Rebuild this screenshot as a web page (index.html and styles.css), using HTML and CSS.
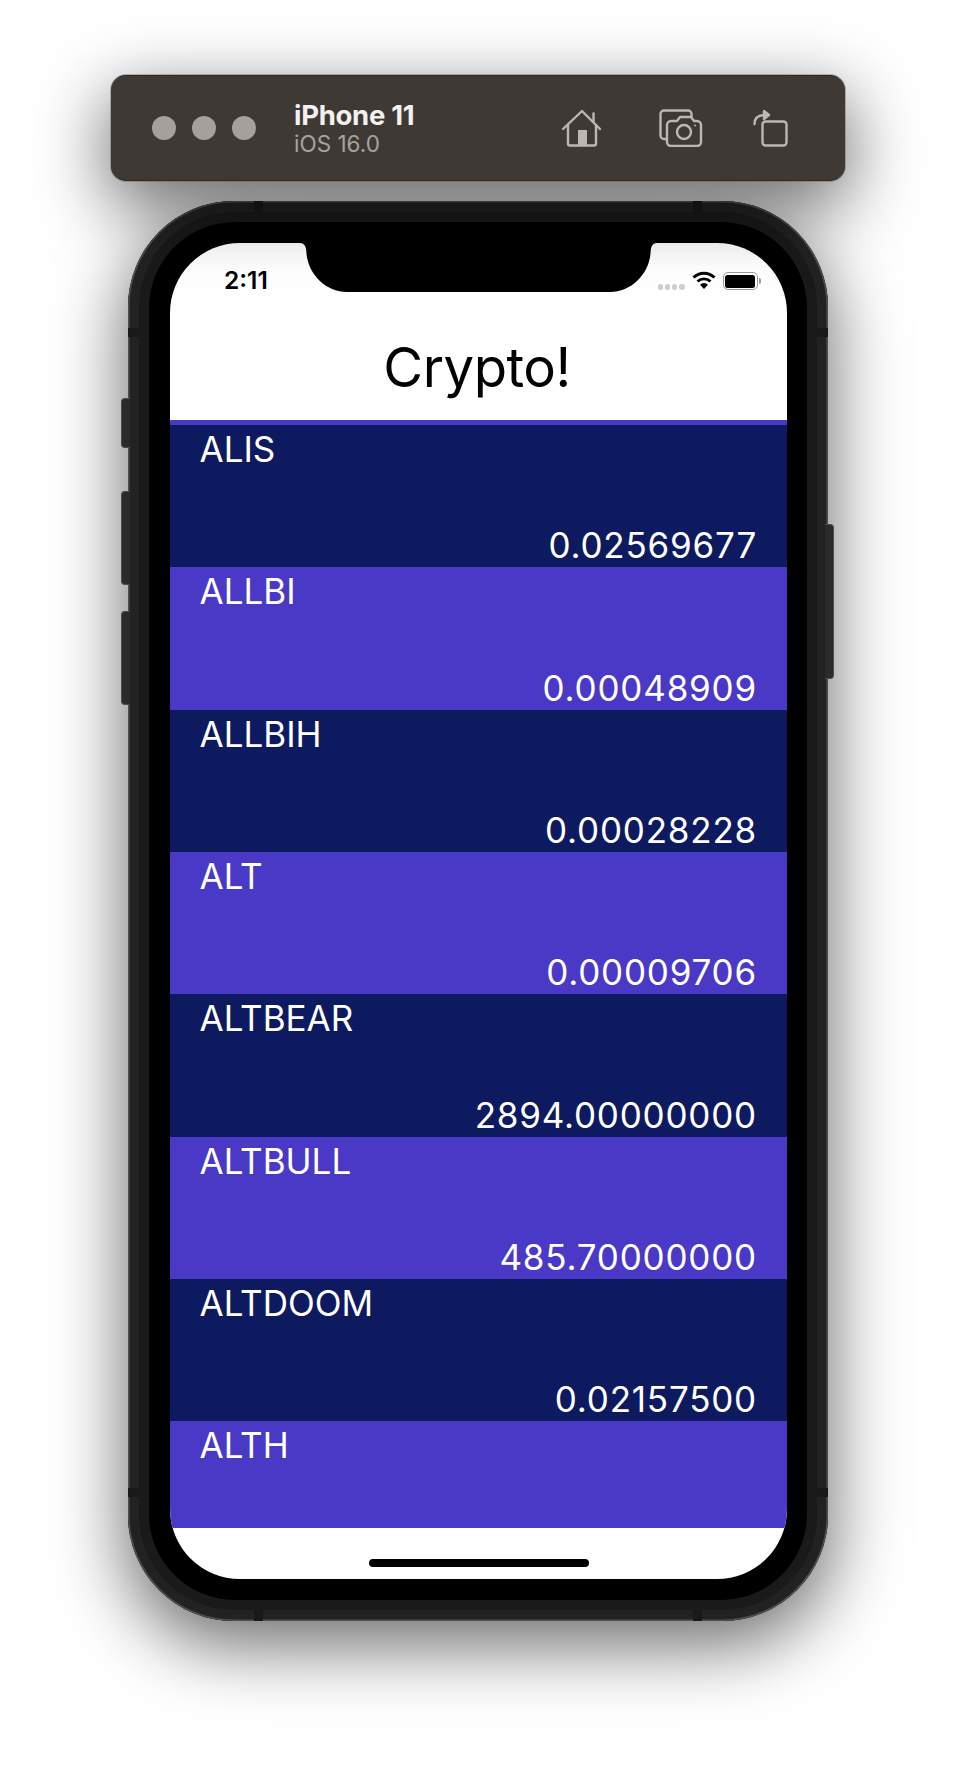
FILE: index.html
```html
<!DOCTYPE html>
<html lang="en">
<head>
<meta charset="utf-8">
<title>Crypto!</title>
<link rel="stylesheet" href="styles.css">
</head>
<body>
<header class="toolbar">
  <div class="lights"><span class="light"></span><span class="light"></span><span class="light"></span></div>
  <div class="device-name"><div class="model">iPhone 11</div><div class="os">iOS 16.0</div></div>
  <div class="tools">
    <svg class="tool-home" width="42" height="38" viewBox="0 0 42 38" fill="none" stroke="#bdb7b1" stroke-width="2.4" stroke-linecap="round" stroke-linejoin="round"><path d="M2 20 21 2l18 18"/><path d="M32.500 13V4.500"/><path d="M7 16v18.500a2 2 0 0 0 2 2h24a2 2 0 0 0 2-2V16"/><rect x="17" y="21" width="9" height="15" fill="#bdb7b1" stroke="none"/></svg>
    <svg class="tool-camera" width="44" height="38" viewBox="0 0 44 38" fill="none" stroke="#bdb7b1" stroke-width="2.4" stroke-linecap="round" stroke-linejoin="round"><path d="M8 30H5a3.500 3.500 0 0 1-3.500-3.500V5A3.500 3.500 0 0 1 5 1.500h24A3.500 3.500 0 0 1 32.500 5v3"/><path d="M12 12h6l3-4h11l3 4h3a4 4 0 0 1 4 4v17a4 4 0 0 1-4 4H12a4 4 0 0 1-4-4V16a4 4 0 0 1 4-4z"/><circle cx="25" cy="23" r="7"/><circle cx="36" cy="16.500" r="1" fill="#bdb7b1" stroke="none"/></svg>
    <svg class="tool-rotate" width="36" height="38" viewBox="0 0 36 38" fill="none" stroke="#bdb7b1" stroke-width="2.4" stroke-linecap="round" stroke-linejoin="round"><rect x="10.500" y="12.500" width="24" height="24" rx="3"/><path d="M2.500 15C2.500 9.500 6 6.500 11.500 6"/><path d="M12 2 17 6l-5 4z" fill="#bdb7b1"/></svg>
  </div>
</header>

<div class="device">
  <span class="btn btn-mute"></span><span class="btn btn-up"></span><span class="btn btn-down"></span><span class="btn btn-power"></span>
  <span class="ant ant-h ant-tl"></span><span class="ant ant-h ant-tr"></span><span class="ant ant-h ant-bl"></span><span class="ant ant-h ant-br"></span>
  <span class="ant ant-v ant-lt"></span><span class="ant ant-v ant-rt"></span><span class="ant ant-v ant-lb"></span><span class="ant ant-v ant-rb"></span>
  <div class="bezel">
    <main class="screen">
      <svg class="notch" width="357" height="49" viewBox="0 0 357 49"><path d="M0 0h357c-4 0-6 3-6.300 8C350 30 332 49 310 49H47C25 49 7 30 6.300 8 6 3 4 0 0 0z" fill="#000"/></svg>
      <div class="status">
        <span class="time">2:11</span>
        <div class="status-icons">
          <div class="signal"><i></i><i></i><i></i><i></i></div>
          <svg width="24" height="18" viewBox="0 0 24 18" fill="none" stroke="#000"><path d="M1.500 6.500a15 15 0 0 1 21 0" stroke-width="3"/><path d="M5.500 10.500a9.500 9.500 0 0 1 13 0" stroke-width="2.800"/><path d="M12 18l-4-4.200a5.600 5.600 0 0 1 8 0z" fill="#000" stroke="none"/></svg>
          <div class="battery"><div class="battery-fill"></div></div>
          <span class="battery-tip"></span>
        </div>
      </div>
      <h1 class="title">Crypto!</h1>
      <div class="list">
        <div class="row"><div class="sym">ALIS</div><div class="price">0.02569677</div></div>
        <div class="row"><div class="sym">ALLBI</div><div class="price">0.00048909</div></div>
        <div class="row"><div class="sym">ALLBIH</div><div class="price">0.00028228</div></div>
        <div class="row"><div class="sym">ALT</div><div class="price">0.00009706</div></div>
        <div class="row"><div class="sym">ALTBEAR</div><div class="price">2894.00000000</div></div>
        <div class="row"><div class="sym">ALTBULL</div><div class="price">485.70000000</div></div>
        <div class="row"><div class="sym">ALTDOOM</div><div class="price">0.02157500</div></div>
        <div class="row"><div class="sym">ALTH</div></div>
      </div>
      <div class="home-bar"><span class="home-indicator"></span></div>
    </main>
  </div>
</div>
</body>
</html>
```
FILE: styles.css
```css
* { box-sizing: border-box; }
html, body { margin: 0; padding: 0; }
body {
  width: 956px;
  height: 1770px;
  padding: 75px 0 0 111px;
  background: #fff;
  font-family: Inter, "Liberation Sans", sans-serif;
  overflow: hidden;
}
.toolbar {
  width: 734px;
  height: 106px;
  display: flex;
  align-items: center;
  background: #3f3935;
  border-radius: 15px;
  border-top: 1px solid #2d2926;
  border-bottom: 1px solid #2d2926;
  box-shadow: 0 0 0 1px rgba(90,85,80,.35), 0 22px 70px 4px rgba(0,0,0,.56);
  padding: 0 57px 0 41px;
  position: relative;
  z-index: 2;
}
.lights { display: flex; gap: 16px; }
.light { width: 24px; height: 24px; border-radius: 50%; background: #a6a09b; }
.device-name { margin-left: 38px; padding-top: 2px; }
.model { font-size: 27.500px; line-height: 30px; font-weight: 700; color: #f2f1f0; letter-spacing: -.3px; }
.os { font-size: 22.500px; line-height: 28px; color: #a8a29d; }
.tools { margin-left: auto; display: flex; align-items: center; }
.tool-camera { margin: 0 49px 0 56px; }
.device {
  position: relative;
  width: 700px;
  height: 1420px;
  margin: 20px 0 0 17px;
  padding: 21px;
  border-radius: 106px;
  background: #1a1a1a;
  box-shadow: inset 0 0 0 1.500px #505050, inset 0 0 0 11px #222, 0 22px 70px 4px rgba(0,0,0,.56);
}
.btn { position: absolute; width: 9px; background: #2a2a2a; border: 1px solid #4d4d4d; border-right: 0; border-radius: 4px 0 0 4px; left: -7px; }
.btn-mute { top: 197px; height: 50px; }
.btn-up { top: 290px; height: 94px; }
.btn-down { top: 410px; height: 94px; }
.btn-power { left: auto; right: -6px; top: 323px; height: 155px; border-right: 1px solid #4d4d4d; border-left: 0; border-radius: 0 4px 4px 0; }
.ant { position: absolute; background: #191919; }
.ant-h { width: 9px; height: 11px; }
.ant-v { width: 11px; height: 9px; }
.ant-tl { left: 126px; top: 0; }
.ant-tr { right: 126px; top: 0; }
.ant-bl { left: 126px; bottom: 0; }
.ant-br { right: 126px; bottom: 0; }
.ant-lt { left: 0; top: 127px; }
.ant-rt { right: 0; top: 127px; }
.ant-lb { left: 0; bottom: 124px; }
.ant-rb { right: 0; bottom: 124px; }
.bezel { width: 100%; height: 100%; background: #000; border-radius: 86px; padding: 21px; }
.screen {
  position: relative;
  width: 617px;
  height: 1336px;
  background: #fff;
  border-radius: 70px;
  overflow: hidden;
}
.notch { position: absolute; left: 130px; top: 0; }
.status { height: 62px; position: relative; display: flex; justify-content: space-between; }
.time { margin: 22px 0 0 54px; font-size: 24.500px; line-height: 30px; font-weight: 600; color: #000; }
.status-icons { display: flex; align-items: flex-start; margin: 28px 26px 0 0; }
.signal { display: flex; gap: 1.600px; margin: 13px 7px 0 0; }
.signal i { width: 5.500px; height: 5.500px; border-radius: 50%; background: #cfcfcf; }
.battery { width: 35px; height: 18px; margin: 1px 0 0 7px; border: 1.500px solid #9a9a9a; border-radius: 5px; padding: 1.500px; }
.battery-fill { height: 100%; background: #000; border-radius: 2.500px; }
.battery-tip { width: 2px; height: 6px; margin: 7px 0 0 1.500px; background: #9a9a9a; border-radius: 0 2px 2px 0; }
.title { margin: 0; height: 115px; padding-right: 3px; font-size: 54.500px; line-height: 124px; font-weight: 400; text-align: center; color: #000; letter-spacing: -.5px; }
.list { height: 1108px; border-top: 5px solid #4939c6; overflow: hidden; }
.row { height: 142.330px; padding: 3px 30px 0 29.500px; display: flex; flex-direction: column; justify-content: space-between; color: #fff; font-size: 35px; line-height: 43px; background: #0d1a5f; }
.row:nth-child(even) { background: #4939c6; }
.price { text-align: right; letter-spacing: .8px; }
.home-bar { height: 51px; display: flex; justify-content: center; padding-top: 31px; }
.home-indicator { width: 220px; height: 8px; border-radius: 4px; background: #000; }
```
